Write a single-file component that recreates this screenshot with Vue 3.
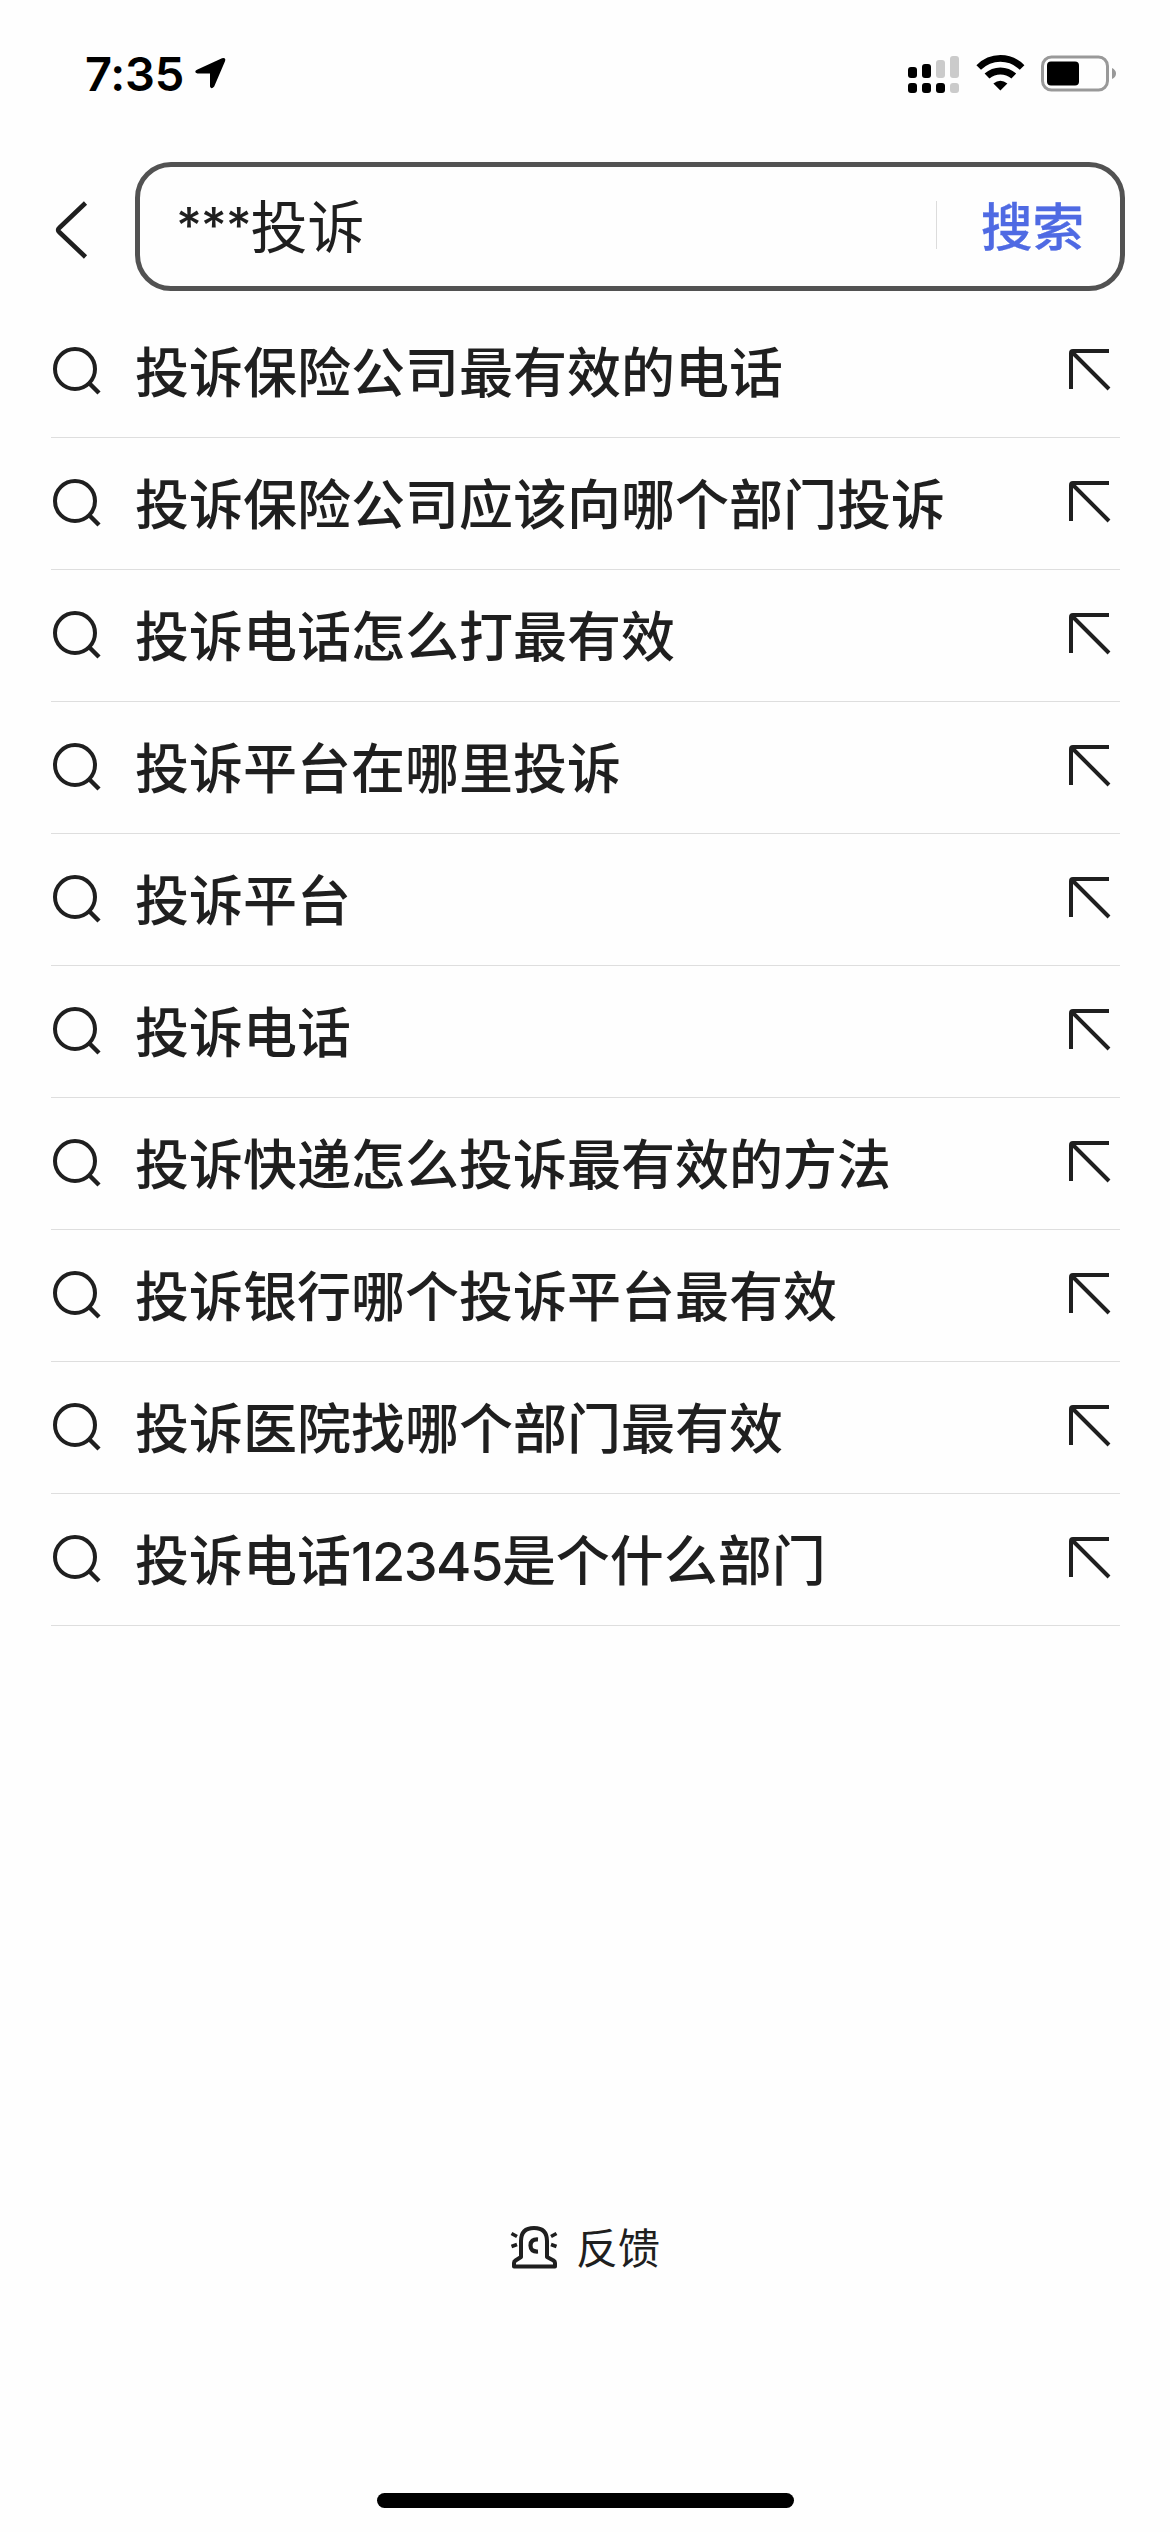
<script setup>
const suggestions = [
  ['投诉保险公司最有效的电话'],
  ['投诉保险公司应该向哪个部门投诉'],
  ['投诉电话怎么打最有效'],
  ['投诉平台在哪里投诉'],
  ['投诉平台'],
  ['投诉电话'],
  ['投诉快递怎么投诉最有效的方法'],
  ['投诉银行哪个投诉平台最有效'],
  ['投诉医院找哪个部门最有效'],
  ['投诉电话', '12345', '是个什么部门'],
]
</script>

<template>
  <div class="screen">
    <header class="status">
      <span class="time">7:35</span>
      <svg class="location" width="34" height="34" viewBox="0 0 34 34">
        <path d="M3.5 12.5 L28 1.2 Q32.3 0 31 4.2 L20.2 29.5 Q17.2 33 16 29.5 V16.5 H3.5 Q-1 14.8 3.5 12.5Z" />
      </svg>
      <svg class="signal" width="52" height="38" viewBox="0 0 52 38">
        <g>
          <rect x="0" y="11" width="9" height="11" rx="3" />
          <rect x="14" y="8" width="9" height="14" rx="3" />
          <rect x="0" y="27" width="9" height="10" rx="3" />
          <rect x="14" y="27" width="9" height="10" rx="3" />
          <rect x="28" y="27" width="9" height="10" rx="3" />
        </g>
        <g fill="#cbcbcb">
          <rect x="28" y="4" width="9" height="18" rx="3" />
          <rect x="42" y="0" width="9" height="22" rx="3" />
          <rect x="42" y="27" width="9" height="10" rx="3" />
        </g>
      </svg>
      <svg class="wifi" width="50" height="38" viewBox="0 0 50 38">
        <path d="M0.4 11.2 Q10.6 1 24.4 1 Q38.2 1 48.4 11.2 L43.8 15.8 Q35.4 7.8 24.4 7.8 Q13.4 7.8 5 15.8Z" />
        <path d="M8.6 19.6 Q15.4 13.6 24.4 13.6 Q33.4 13.6 40.2 19.6 L35.4 24.6 Q30.4 20.6 24.4 20.6 Q18.4 20.6 13.4 24.6Z" />
        <path d="M17.4 29.5 Q24.4 24 31.4 29.5 L24.4 36.5Z" />
      </svg>
      <svg class="battery" width="76" height="38" viewBox="0 0 76 38">
        <rect x="1.5" y="2" width="65" height="33" rx="9" fill="none" stroke="#999" stroke-width="3" />
        <rect x="6" y="6.5" width="32" height="24" rx="4" />
        <path d="M71 13 Q75 15 75 18.5 Q75 22 71 24Z" fill="#999" />
      </svg>
    </header>

    <div class="search">
      <svg class="back" width="34" height="60" viewBox="0 0 34 60">
        <path d="M30.5 3 L4.2 28 Q2 30 4.2 32 L30.5 57" fill="none" stroke="#1f1f1f" stroke-width="4.6" />
      </svg>
      <div class="box">
        <span class="query"><span class="stars">***</span>投诉</span>
        <span class="submit">搜索</span>
      </div>
    </div>

    <ul class="list">
      <li v-for="(parts, i) in suggestions" :key="i" class="row">
        <svg class="glass" width="50" height="50" viewBox="0 0 50 50">
          <g fill="none" stroke="#1f1f1f">
            <circle cx="23" cy="23" r="20" stroke-width="4" />
            <path d="M37.5 37.5 L47 47" stroke-width="4.4" />
          </g>
        </svg>
        <span class="text"><span v-for="(p, j) in parts" :key="j" :class="{ digits: j === 1 }">{{ p }}</span></span>
        <svg class="fill" width="42" height="42" viewBox="0 0 42 42">
          <path d="M40 2 H4 Q2 2 2 4 V40 M3 3 L40 40" fill="none" stroke="#1f1f1f" stroke-width="4" />
        </svg>
      </li>
    </ul>

    <div class="feedback">
      <svg width="48" height="46" viewBox="0 0 48 46">
        <g fill="none" stroke="#1f1f1f" stroke-width="4">
          <path d="M11 32 V16 Q11 3 24 3 Q37 3 37 16 V32 L43.5 35.5 Q45 36.5 45 38 V41.5 H4 V38 Q4 36.5 5.5 35.5Z" stroke-linejoin="round" />
          <path d="M28 14.5 Q20.5 14 20.5 20.5 Q20.5 27 28 26.5" stroke-width="4.2" />
          <path d="M1.5 8.5 L7 11.5 M1.5 21.5 L7 19.5 M46.5 8.5 L41 11.5 M46.5 21.5 L41 19.5" stroke-width="3.6" />
        </g>
      </svg>
      <span class="feedback-label">反馈</span>
    </div>
    <div class="home"></div>
  </div>
</template>

<style>
body {
  background: #fefefe;
}
</style>

<style scoped>
.screen {
  box-sizing: border-box;
  width: 1170px;
  height: 2532px;
  display: flex;
  flex-direction: column;
  overflow: hidden;
  background: #fefefe;
  color: #1f1f1f;
  font-family: "Noto Sans CJK SC", sans-serif;
}
svg {
  display: block;
  flex: none;
}
.status {
  height: 162px;
  box-sizing: border-box;
  padding: 56px 55px 0 85px;
  display: flex;
  align-items: flex-start;
}
.time {
  width: 109px;
  color: #000;
  font: 600 47px/56px Inter, sans-serif;
  letter-spacing: -0.2px;
  margin-top: -10px;
  white-space: nowrap;
}
.location {
  margin-top: 1px;
}
.signal {
  margin-left: auto;
}
.wifi {
  margin-left: 16px;
  margin-top: -2px;
}
.battery {
  margin-left: 15px;
  margin-top: -1px;
  margin-right: -2px;
}
.search {
  display: flex;
  height: 129px;
  padding: 0 45px 0 55px;
  align-items: center;
}
.back {
  margin-top: 6px;
}
.box {
  box-sizing: border-box;
  flex: 1;
  height: 129px;
  margin-left: 46px;
  border: 5px solid #525252;
  border-radius: 36px;
  display: flex;
  align-items: center;
  justify-content: space-between;
  padding: 0 36px;
}
.query {
  margin-bottom: 7px;
  font-size: 57px;
  line-height: 80px;
}
.stars {
  font-family: Inter, sans-serif;
  font-size: 50px;
  font-weight: 500;
  line-height: 0;
  letter-spacing: -1.2px;
  vertical-align: 5px;
}
.submit {
  height: 48px;
  margin-top: -3px;
  border-left: 1px solid #dcdcdc;
  padding-left: 44px;
  color: #4f6ae3;
  font-size: 51.5px;
  font-weight: 500;
  line-height: 45px;
  -webkit-text-stroke: 0.3px #4f6ae3;
}
.list {
  list-style: none;
  margin: 15px 50px 0 51px;
  padding: 0;
}
.row {
  box-sizing: border-box;
  height: 132px;
  border-bottom: 1px solid #dedede;
  display: flex;
  align-items: center;
}
.glass {
  margin: 0 0 1px 1px;
}
.text {
  flex: 1;
  margin: 0 0 4px 33px;
  font-size: 54px;
  font-weight: 500;
  line-height: 80px;
  white-space: nowrap;
}
.digits {
  font-family: Inter, sans-serif;
  letter-spacing: -1.5px;
  line-height: 1;
}
.fill {
  margin: 0 9px 3px 0;
}
.feedback {
  margin-top: 592px;
  margin-left: 510px;
  height: 60px;
  display: flex;
  align-items: center;
  gap: 18px;
  font-size: 42px;
}
.feedback-label {
  margin-bottom: 5px;
}
.home {
  width: 417px;
  height: 15px;
  border-radius: 8px;
  background: #000;
  margin: auto auto 24px 377px;
}
</style>
